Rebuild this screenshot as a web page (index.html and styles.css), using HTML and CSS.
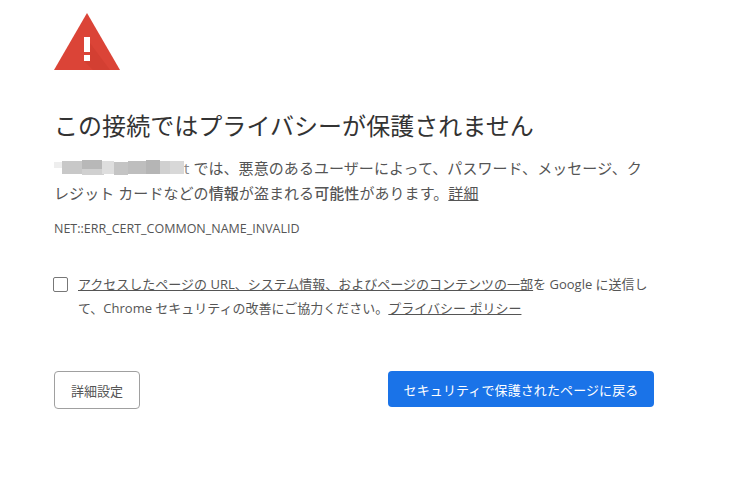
FILE: index.html
```html
<!DOCTYPE html>
<html lang="ja">
<head>
  <meta charset="UTF-8">
  <title>プライバシー エラー</title>
  <link rel="stylesheet" href="styles.css">
</head>
<body>
  <div class="interstitial">
    <svg class="warn-icon" width="66" height="57" viewBox="0 0 66 57">
      <polygon points="33,0 66,57 0,57" fill="#db4437"/>
      <polygon points="36,30 36,48 30,48 39,57 56,57" fill="#c9392d" opacity="0.45"/>
      <rect x="30" y="24" width="6" height="15" fill="#fff"/>
      <rect x="30" y="42" width="6" height="6" fill="#fff"/>
    </svg>
    <h1>この接続ではプライバシーが保護されません</h1>
    <p class="message"><svg class="blurred" width="130" height="16" viewBox="0 0 130 16">
        <rect x="0" y="2" width="8" height="6" fill="#eeeeee"/>
        <rect x="8" y="1" width="20" height="13" fill="#c8c8c8"/>
        <rect x="28" y="0" width="20" height="9" fill="#b8b8b8"/>
        <rect x="28" y="9" width="22" height="6" fill="#d0d0d0"/>
        <rect x="48" y="1" width="12" height="13" fill="#dedede"/>
        <rect x="60" y="2" width="14" height="13" fill="#c4c4c4"/>
        <rect x="74" y="1" width="18" height="13" fill="#bebebe"/>
        <rect x="92" y="0" width="14" height="14" fill="#b5b5b5"/>
        <rect x="106" y="1" width="10" height="13" fill="#d0d0d0"/>
        <rect x="116" y="1" width="14" height="13" fill="#d8d8d8"/>
      </svg><span class="url-end">t</span> では、悪意のあるユーザーによって、パスワード、メッセージ、クレジット カードなどの<b>情報</b>が盗まれる<b>可能性</b>があります。<a href="#">詳細</a></p>
    <p class="error-code">NET::ERR_CERT_COMMON_NAME_INVALID</p>
    <div class="report">
      <span class="checkbox"></span>
      <p><a href="#">アクセスしたページの URL、システム情報、およびページのコンテンツの一部</a>を Google に送信して、Chrome セキュリティの改善にご協力ください。<a href="#">プライバシー ポリシー</a></p>
    </div>
    <div class="buttons">
      <button class="btn-details">詳細設定</button>
      <button class="btn-back">セキュリティで保護されたページに戻る</button>
    </div>
  </div>
</body>
</html>
```

FILE: styles.css
```css
body {
  background: #fff;
  color: #333;
  font-family: "Open Sans", "Noto Sans CJK JP", sans-serif;
  margin: 0;
  padding: 0;
}
.interstitial {
  width: 600px;
  padding: 13px 0 0 54px;
}
.warn-icon {
  display: block;
}
h1 {
  color: #333;
  font-size: 24px;
  font-weight: 400;
  letter-spacing: 0.05px;
  line-height: 30px;
  margin: 41px 0 0;
}
.message {
  color: #555;
  font-size: 15px;
  letter-spacing: 0.07px;
  line-height: 25px;
  margin: 15px 0 0;
}
.message b {
  font-weight: 500;
}
.message a, .report a {
  color: #555;
  text-decoration: underline;
}
.blurred {
  vertical-align: -2px;
  filter: blur(0.7px);
}
.url-end {
  color: #888;
}
.error-code {
  color: #555;
  font-size: 12.5px;
  line-height: 16px;
  margin: 15px 0 0;
}
.report {
  display: flex;
  gap: 10px;
  margin-top: 35px;
  margin-left: -1px;
}
.checkbox {
  width: 13px;
  height: 13px;
  border: 1px solid #777;
  border-radius: 2px;
  margin-top: 5px;
  flex: none;
}
.report p {
  color: #555;
  font-size: 13px;
  line-height: 24px;
  margin: 0;
  width: 576px;
}
.buttons {
  display: flex;
  justify-content: space-between;
  align-items: flex-start;
  margin-top: 51px;
}
button {
  font-family: inherit;
  border-radius: 4px;
  padding: 0;
}
.btn-details {
  width: 86px;
  height: 38px;
  background: #fff;
  border: 1px solid #a0a0a0;
  color: #555;
  font-size: 13px;
}
.btn-back {
  width: 266px;
  height: 36px;
  background: #1a73e8;
  border: none;
  color: #fff;
  font-size: 13px;
  letter-spacing: 0.1px;
}
```
